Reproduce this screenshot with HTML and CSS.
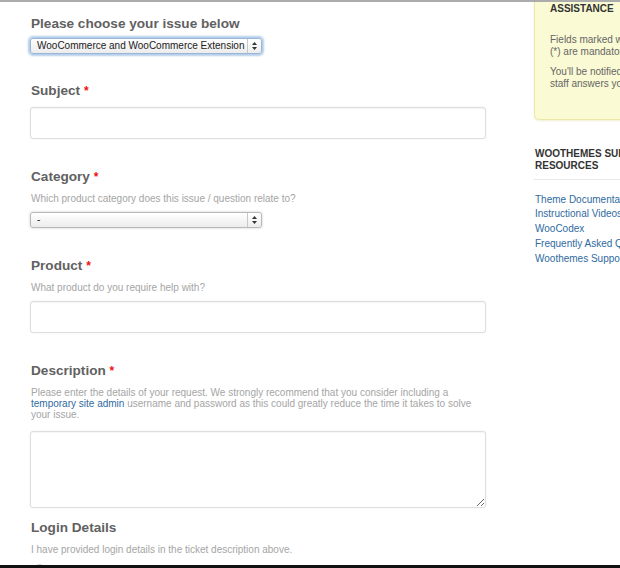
FILE: index.html
```html
<!DOCTYPE html>
<html lang="en">
<head>
<meta charset="utf-8">
<title>Support ticket</title>
<link rel="stylesheet" href="styles.css">
</head>
<body>
<div class="frame">
  <div class="viewport">
    <div class="page">
      <main class="main">
        <div class="field first">
          <h2 class="label">Please choose your issue below</h2>
          <div class="select focused">
            <span class="select-text">WooCommerce and WooCommerce Extension</span>
            <span class="select-arrows"><svg width="5" height="8" viewBox="0 0 5 8"><path d="M2.5 0 L5 3 L0 3 Z M2.5 8 L5 5 L0 5 Z" fill="#333"/></svg></span>
          </div>
        </div>

        <div class="field subject">
          <h2 class="label">Subject <span class="req">*</span></h2>
          <input class="input" type="text">
        </div>

        <div class="field">
          <h2 class="label">Category <span class="req">*</span></h2>
          <p class="help">Which product category does this issue / question relate to?</p>
          <div class="select plain">
            <span class="select-text">-</span>
            <span class="select-arrows"><svg width="5" height="8" viewBox="0 0 5 8"><path d="M2.5 0 L5 3 L0 3 Z M2.5 8 L5 5 L0 5 Z" fill="#333"/></svg></span>
          </div>
        </div>

        <div class="field">
          <h2 class="label">Product <span class="req">*</span></h2>
          <p class="help">What product do you require help with?</p>
          <input class="input" type="text">
        </div>

        <div class="field">
          <h2 class="label">Description <span class="req">*</span></h2>
          <p class="help multi">Please enter the details of your request. We strongly recommend that you consider including a <a href="#">temporary site admin</a> username and password as this could greatly reduce the time it takes to solve your issue.</p>
          <textarea class="textarea"></textarea>
        </div>

        <div class="field login">
          <h2 class="label">Login Details</h2>
          <p class="help">I have provided login details in the ticket description above.</p>
          <span class="radio"></span>
        </div>
      </main>

      <aside class="sidebar">
        <div class="notice">
          <h3 class="notice-title">Assistance</h3>
          <p class="notice-text">Fields marked with an asterisk<br>(*) are mandatory.</p>
          <p class="notice-text">You'll be notified by email when a<br>staff answers your ticket.</p>
        </div>
        <h3 class="res-title">WooThemes Support<br>Resources</h3>
        <ul class="links">
          <li><a href="#">Theme Documentation</a></li>
          <li><a href="#">Instructional Videos</a></li>
          <li><a href="#">WooCodex</a></li>
          <li><a href="#">Frequently Asked Questions</a></li>
          <li><a href="#">Woothemes Support Policy</a></li>
        </ul>
      </aside>
    </div>
  </div>
  <div class="bottom-bar"></div>
</div>
</body>
</html>
```

FILE: styles.css
```css
* { box-sizing: border-box; }

html, body {
  margin: 0;
  padding: 0;
  background: #fff;
  overflow: hidden;
}

body {
  font-family: "Liberation Sans", Arial, Helvetica, sans-serif;
  color: #666;
}

.frame {
  height: 568px;
  display: flex;
  flex-direction: column;
  border-top: 2px solid #acacac;
}

.viewport {
  flex: 1;
  overflow: hidden;
}

.bottom-bar {
  height: 3px;
  background: #111;
}

.page {
  display: flex;
  gap: 47px;
  padding-left: 30px;
  width: 900px;
}

.main {
  width: 457px;
  flex: none;
}

.field {
  margin-top: 29px;
}

.field.first {
  margin-top: 13px;
}

.field.subject {
  margin-top: 28px;
}

.field.login {
  margin-top: 11px;
}

.label {
  margin: 0;
  padding-left: 1px;
  font-size: 13.6px;
  line-height: 18px;
  font-weight: bold;
  color: #616161;
}

.req {
  color: #e11;
  font-size: 12px;
}

.help {
  margin: 6px 0 0;
  padding-left: 1px;
  font-size: 10px;
  line-height: 14px;
  color: #a5a5a5;
}

.help.multi {
  line-height: 11px;
  margin-top: 7px;
}

.help a {
  color: #2f6aa0;
  text-decoration: none;
}

.select {
  display: flex;
  align-items: center;
  width: 232px;
  height: 16px;
  margin-top: 5px;
  border: 1px solid #b8b8b8;
  border-radius: 3px;
  background: linear-gradient(#ffffff, #ececec);
  font-size: 10px;
  color: #222;
}

.select.focused {
  box-shadow: 0 0 2px 2px #b3cdea;
  border-color: #9bb5d6;
}

.select.plain {
  margin-top: 6px;
  box-shadow: 0 0 2px 1px #e8e8e8;
}

.select-text {
  flex: 1;
  padding-left: 6px;
  white-space: nowrap;
  overflow: hidden;
  line-height: 14px;
}

.select-arrows {
  width: 14px;
  height: 100%;
  border-left: 1px solid #c8c8c8;
  display: flex;
  align-items: center;
  justify-content: center;
}

.select-arrows svg { display: block; }

.input {
  display: block;
  width: 456px;
  height: 32px;
  margin-top: 7px;
  border: 1px solid #dedede;
  border-radius: 3px;
  box-shadow: 0 0 2px rgba(0, 0, 0, 0.08), inset 0 1px 1px rgba(0, 0, 0, 0.04);
  background: #fff;
}

.field .help + .input {
  margin-top: 6px;
}

.textarea {
  display: block;
  width: 456px;
  height: 77px;
  margin-top: 11px;
  border: 1px solid #dedede;
  border-radius: 3px;
  box-shadow: 0 0 2px rgba(0, 0, 0, 0.08), inset 0 1px 1px rgba(0, 0, 0, 0.04);
  background: #fff;
  resize: vertical;
}

.radio {
  display: block;
  width: 11px;
  height: 11px;
  margin: 7px 0 0 4px;
  border: 1px solid #ccc;
  border-radius: 50%;
  background: #f4f4f4;
}

/* Sidebar */
.sidebar {
  width: 220px;
  flex: none;
}

.notice {
  background: #fafad4;
  border: 1px solid #ece7a4;
  border-top: none;
  border-radius: 0 0 5px 5px;
  box-shadow: 0 1px 2px rgba(200, 190, 90, 0.25);
  padding: 0 14px 30px 15px;
}

.notice-title {
  margin: 0;
  font-size: 10px;
  line-height: 14px;
  font-weight: bold;
  text-transform: uppercase;
  color: #333;
}

.notice-text {
  margin: 18px 0 0;
  font-size: 10px;
  line-height: 11.5px;
  color: #666;
}

.notice-text + .notice-text {
  margin-top: 9px;
}

.res-title {
  margin: 28px 0 0;
  padding: 0 0 7px 1px;
  font-size: 10px;
  line-height: 12px;
  font-weight: bold;
  text-transform: uppercase;
  color: #333;
  border-bottom: 1px solid #e8e8e8;
}

.links {
  list-style: none;
  margin: 12.5px 0 0;
  padding: 0 0 0 1px;
  font-size: 10px;
  line-height: 14.9px;
}

.links a {
  color: #2f6aa0;
  text-decoration: none;
}
```
